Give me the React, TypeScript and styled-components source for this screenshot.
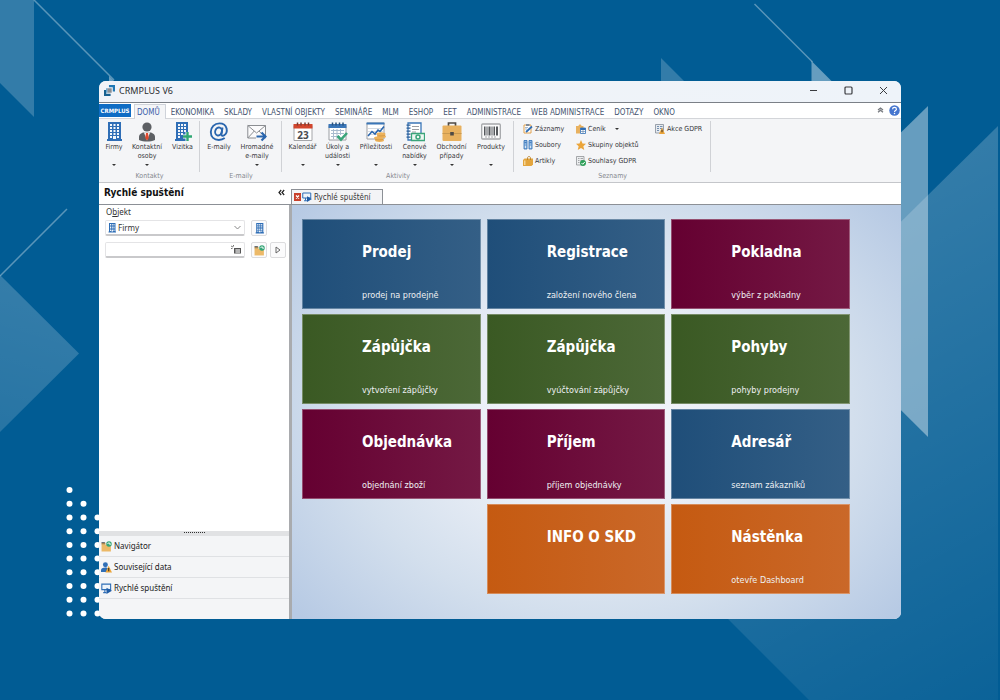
import React, { ReactNode, useState } from 'react';
import styled, { createGlobalStyle } from 'styled-components';

const tahoma = '"DejaVu Sans Condensed", "DejaVu Sans", sans-serif';
const segoe = '"Noto Sans", "Open Sans", sans-serif';

const GlobalStyle = createGlobalStyle`
  *, *::before, *::after { box-sizing: border-box; }
  body { margin: 0; background: #015c94; }
  button, input, select { font: inherit; color: inherit; margin: 0; }
  svg { display: block; flex: none; }
`;

const Page = styled.div`
  position: relative;
  display: flex;
  min-height: 100vh;
  padding: 81px 99px;
  overflow: hidden;
  background: #015c94;
  font-family: ${tahoma};
`;

const Backdrop = styled.svg`
  position: absolute;
  inset: 0;
  width: 100%;
  height: 100%;
`;

const AppWindow = styled.main`
  position: relative;
  display: flex;
  flex-direction: column;
  flex: 1;
  min-width: 0;
  border-radius: 7px;
  overflow: hidden;
  background: #fff;
`;

const TitleBar = styled.header`
  display: flex;
  align-items: center;
  height: 22px;
  padding: 0 0 2px 5px;
  background: linear-gradient(90deg, #f1f3f8, #eef3f9);
  border-bottom: 1px solid #7b8087;
`;

const WindowTitle = styled.h1`
  flex: 1;
  margin: 0 0 0 4px;
  font: 400 9px/12px ${segoe};
  color: #2b2c30;
`;

const WindowButton = styled.button`
  display: grid;
  place-items: center;
  width: 35px;
  height: 18px;
  padding: 0;
  border: 0;
  background: none;
`;

const MenuBar = styled.nav`
  display: flex;
  align-items: stretch;
  height: 16px;
  padding-top: 1px;
  border-bottom: 1px solid #d3d5d9;
`;

const AppTab = styled.button`
  width: 32px;
  height: 13px;
  margin-right: 3px;
  padding: 0;
  border: 0;
  background: #0f6cc4;
  color: #fff;
  font-size: 6px;
  font-weight: 700;
  line-height: 13px;
`;

const MenuTab = styled.button<{ $active?: boolean }>`
  height: 15px;
  padding: ${p => (p.$active ? '0 5px 0 2px' : '0 5px')};
  border: solid ${p => (p.$active ? '#cfd3da' : 'transparent')};
  border-width: ${p => (p.$active ? '1px 1px 0' : '1px 0 0')};
  background: ${p => (p.$active ? '#f4f5f7' : 'none')};
  color: ${p => (p.$active ? '#3a5da8' : '#44546f')};
  font-size: 8px;
  line-height: 16px;
  white-space: nowrap;
`;

const MenuTools = styled.div`
  display: flex;
  align-items: center;
  gap: 5px;
  margin-left: auto;
  padding: 0 1px 2px 0;
`;

const PlainButton = styled.button`
  display: grid;
  place-items: center;
  padding: 0;
  border: 0;
  background: none;
`;

const Ribbon = styled.section`
  display: flex;
  height: 64px;
  background: #f4f5f7;
  border-bottom: 1px solid #c4c6ca;
  color: #37373b;
  font-size: 7px;
`;

const Group = styled.section<{ $pad: number }>`
  position: relative;
  display: flex;
  flex-direction: column;
  justify-content: space-between;
  padding: 0 ${p => p.$pad}px;
  &::after {
    content: '';
    position: absolute;
    top: 2px;
    bottom: 10px;
    right: 0;
    border-right: 1px solid #d0d2d6;
  }
`;

const GroupBody = styled.div`
  display: flex;
`;

const GroupName = styled.h2`
  margin: 0;
  padding-bottom: 1px;
  font-size: 7px;
  line-height: 9px;
  font-weight: 400;
  text-align: center;
  color: #85888e;
`;

const BigButton = styled.button<{ $width: number }>`
  display: flex;
  flex-direction: column;
  align-items: center;
  width: ${p => p.$width}px;
  padding: 3px 0 0;
  border: 0;
  background: none;
  line-height: 9px;
`;

const BigLabel = styled.span`
  height: 22px;
  padding-top: 1px;
  white-space: pre-line;
`;

const Caret = styled.i`
  border: 2px solid transparent;
  border-top-color: #333;
  border-bottom: 0;
`;

const ListGrid = styled.div`
  display: grid;
  grid-template-columns: 53px 79px auto;
  grid-auto-rows: 16px;
  padding-top: 2px;
`;

const SmallButton = styled.button`
  display: flex;
  align-items: center;
  gap: 2px;
  padding: 0;
  border: 0;
  background: none;
  white-space: nowrap;
  ${Caret} { margin-left: 7px; }
`;

const Body = styled.div`
  display: flex;
  flex: 1;
`;

const Sidebar = styled.aside`
  display: flex;
  flex-direction: column;
  width: 190px;
  flex: none;
`;

const SideHeader = styled.header`
  display: flex;
  align-items: center;
  justify-content: space-between;
  height: 22px;
  padding: 0 4px 2px 5px;
  border-bottom: 1px solid #8c9096;
`;

const SideTitle = styled.h2`
  margin: 0;
  font-size: 10px;
  line-height: 14px;
  color: #111;
`;

const SearchForm = styled.form`
  display: flex;
  flex-direction: column;
  flex: 1;
  padding: 2px 3px 0 6px;
  font: 8px/11px ${segoe};
  color: #333;
`;

const FieldLabel = styled.label`
  padding-left: 1px;
  line-height: 10px;
`;

const FieldRow = styled.div`
  display: flex;
  align-items: center;
  gap: 3px;
  height: 22px;
`;

const Field = styled.div`
  display: flex;
  align-items: center;
  flex: 1;
  gap: 1px;
  height: 16px;
  margin-right: 3px;
  padding: 0 3px 0 1px;
  border: 1px solid #e4e4e6;
  border-bottom: 2px solid #c9c9cb;
  border-radius: 2px;
`;

const SelectBox = styled.select`
  appearance: none;
  flex: 1;
  min-width: 0;
  padding: 0;
  border: 0;
  outline: 0;
  background: none;
`;

const TextBox = styled.input`
  flex: 1;
  min-width: 0;
  padding: 0;
  border: 0;
  outline: 0;
  background: none;
`;

const ToolButton = styled.button`
  display: grid;
  place-items: center;
  width: 16px;
  height: 16px;
  padding: 0;
  border: 1px solid #dcdcde;
  border-radius: 2px;
  background: #fbfbfc;
`;

const Grip = styled.div`
  height: 5px;
  padding-top: 1px;
  background: #e1e2e4;
  &::before {
    content: '';
    display: block;
    width: 21px;
    margin: 0 auto;
    border-top: 1px dotted #333;
  }
`;

const SideNav = styled.nav`
  padding-bottom: 20px;
  background: #f4f5f7;
`;

const SideItem = styled.button`
  display: flex;
  align-items: center;
  gap: 2px;
  width: 100%;
  height: 21px;
  padding: 0 2px;
  border: 0;
  border-bottom: 1px solid #dfe1e4;
  background: none;
  font: 8px/12px ${segoe};
  color: #222;
`;

const Content = styled.section`
  display: flex;
  flex-direction: column;
  flex: 1;
  min-width: 0;
`;

const TabStrip = styled.div`
  display: flex;
  align-items: flex-end;
  height: 22px;
  padding-left: 2px;
  border-bottom: 1px solid #8c9096;
`;

const DocTab = styled.div`
  display: flex;
  align-items: center;
  gap: 1px;
  height: 15px;
  padding: 0 11px 0 2px;
  border: 1px solid #8c9096;
  border-bottom: 0;
  background: #f3f4f6;
`;

const DocTabName = styled.button`
  display: flex;
  align-items: center;
  gap: 2px;
  padding: 0;
  border: 0;
  background: none;
  font: 8px/11px ${tahoma};
  color: #333;
  white-space: nowrap;
`;

const Board = styled.div`
  flex: 1;
  padding: 14px 51px 24px 10px;
  border-left: 3px solid #a9abae;
  background: radial-gradient(ellipse 62% 72% at 50% 50%, #f7f9fc 0%, #e9eef6 36%, #d3dfed 68%, #b7cae4 104%);
`;

const TileGrid = styled.div`
  display: grid;
  grid-template-columns: repeat(3, minmax(0, 1fr));
  gap: 5px 6px;
`;

const tones = {
  blue: ['#1f4e79', '#345f86'],
  wine: ['#650031', '#741944'],
  green: ['#3a5923', '#4c6837'],
  orange: ['#c55a11', '#ca6829'],
};
type Tone = keyof typeof tones;

const Tile = styled.button<{ $tone: Tone; $column: number }>`
  display: flex;
  flex-direction: column;
  justify-content: space-between;
  grid-column: ${p => p.$column};
  height: 90px;
  padding: 22px 4px 7px 59px;
  border: 1px solid rgba(255, 255, 255, 0.3);
  background: linear-gradient(90deg, ${p => tones[p.$tone][0]}, ${p => tones[p.$tone][1]}) border-box;
  color: #fff;
  text-align: left;
`;

const TileTitle = styled.strong`
  font-size: 15px;
  line-height: 20px;
  white-space: nowrap;
`;

const TileNote = styled.span`
  font-size: 9px;
  line-height: 12px;
  white-space: nowrap;
  color: #eef0f3;
`;

/* ---------- icons ---------- */

const Icon = ({ size = 20, children }: { size?: number; children: ReactNode }) => (
  <svg width={size} height={size} viewBox="0 0 20 20" fill="none" aria-hidden="true">{children}</svg>
);

const Building = ({ size = 20 }: { size?: number }) => (
  <Icon size={size}>
    <path fill="#2f6eb6" d="M4 0h13v17h1v2H3v-2h1z" />
    <path fill="#f4f7fb" d="M6 2h2v2H6zM9.500 2h2v2h-2zM13 2h2v2h-2zM6 5h2v2H6zM9.500 5h2v2h-2zM13 5h2v2h-2zM6 8h2v2H6zM9.500 8h2v2h-2zM13 8h2v2h-2zM6 11h2v2H6zM9.500 11h2v2h-2zM13 11h2v2h-2zM6 14h2v2H6zM9 14h3v3H9zM13 14h2v2h-2z" />
  </Icon>
);

const BuildingPlus = () => (
  <Icon>
    <path fill="#2f6eb6" d="M3 0h12v17h1v2H2v-2h1z" />
    <path fill="#f4f7fb" d="M5 2h2v2H5zM8 2h2v2H8zM11 2h2v2h-2zM5 5h2v2H5zM8 5h2v2H8zM11 5h2v2h-2zM5 8h2v2H5zM8 8h2v2H8zM11 8h2v2h-2zM5 11h2v2H5zM8 11h2v2H8zM5 14h2v2H5z" />
    <path stroke="#f4f5f7" strokeWidth="4" d="M14.500 10v9M10 14.500h9" />
    <path stroke="#2fa874" strokeWidth="2.400" d="M14.500 10v9M10 14.500h9" />
  </Icon>
);

const Person = () => (
  <Icon>
    <circle cx="10" cy="5" r="4.600" fill="#5d6064" />
    <path fill="#5d6064" d="M2 18v-3c0-3 3-4.500 5-4.500h6c2 0 5 1.500 5 4.500v3c-5 2-11 2-16 0z" />
    <path fill="#fff" d="M7 10.500h6l-3 8z" />
    <path fill="#e04a2f" d="M9 11h2l.8 5-1.800 2.500L8.200 16z" />
  </Icon>
);

const At = () => (
  <Icon>
    <g stroke="#2a66ae" strokeWidth="1.900">
      <ellipse cx="9.500" cy="9.500" rx="3.300" ry="4" transform="rotate(18 9.500 9.500)" />
      <path d="M13.500 5.500l-1 6.500c-.2 2 1.300 2.300 2.700 1.300 2-1.400 3-4 2.400-6.800C16.700 3 13.800 1.400 10.500 1.400 5.500 1.400 1.800 5 1.800 10c0 5 3.400 8 8 8 2.300 0 4.200-.6 5.900-1.900" />
    </g>
  </Icon>
);

const MailForward = () => (
  <Icon>
    <path fill="#fbfbfc" stroke="#8b8e92" d="M.8 3.500h17.700V16H.8z" />
    <path stroke="#8b8e92" d="M.8 3.500l8.800 7.500 8.900-7.500M.8 16l6.500-7M18.500 16L12 9" />
    <path stroke="#f4f5f7" strokeWidth="5" d="M9 14.500h9" />
    <path stroke="#2a66ae" strokeWidth="2.200" d="M9.500 14.500h8M14.500 10.500l4 4-4 4" />
  </Icon>
);

const CalendarDay = () => (
  <Icon>
    <path fill="#fff" stroke="#a4a6a9" d="M1 3.500h18V18.500H1z" />
    <path fill="#d2452d" d="M.5 2h19v4.500H.5z" />
    <path stroke="#7c3a30" strokeWidth="1.500" d="M4.500.5v3M8 .5v3M12 .5v3M15.500 .5v3" />
    <text x="10" y="16.500" textAnchor="middle" fontFamily="Noto Sans, sans-serif" fontWeight="700" fontSize="10" fill="#4a4c50">23</text>
  </Icon>
);

const CalendarCheck = () => (
  <Icon>
    <path fill="#fff" stroke="#9b9ea3" d="M1 3.500h17V18H1z" />
    <path fill="#3a76b8" d="M.5 2h18v4H.5z" />
    <path stroke="#27507c" strokeWidth="1.500" d="M4.500.5v3M8 .5v3M11.500 .5v3M15 .5v3" />
    <path stroke="#a9bccf" d="M3 8.500h13M3 11.500h13M3 14.500h9M5.500 7v10M9 7v10M12.500 7v6" />
    <path stroke="#3aa57a" strokeWidth="2.600" d="M9.500 14l3.500 3.700 6-6.700" />
  </Icon>
);

const Opportunity = () => (
  <Icon>
    <path fill="#fff" stroke="#9b9ea3" d="M1 1h17v16H1z" />
    <path fill="#3a76b8" d="M.5.5h18v2H.5z" />
    <path stroke="#d4dae2" d="M2 6.500h15M2 9.500h15M2 12.500h9" />
    <path stroke="#2a66ae" strokeWidth="1.600" d="M2 14l4-4.500 3 2.500 3-4 2 1.500 4-5" />
    <g fill="#ecb25c">
      <ellipse cx="15" cy="12" rx="4.500" ry="1.700" />
      <ellipse cx="15.500" cy="14.500" rx="4.500" ry="1.700" />
      <ellipse cx="12.500" cy="16" rx="4.500" ry="1.700" />
      <ellipse cx="13.500" cy="18.200" rx="4.500" ry="1.700" />
    </g>
    <path stroke="#c98a33" strokeWidth=".6" d="M11 13.300c2 .9 6 .9 8 0M9 17.300c2 .8 6 .8 8 0" />
  </Icon>
);

const PriceOffer = () => (
  <Icon>
    <path fill="#fff" stroke="#3a76b8" strokeWidth="1.300" d="M3 1h13v17H3z" />
    <path fill="#2d5f98" d="M1.500 2.500h4v1.200h-4zM1.500 5.500h4v1.200h-4zM1.500 8.500h4v1.200h-4zM1.500 11.500h4v1.200h-4zM1.500 14.500h4v1.200h-4z" />
    <path stroke="#9b9ea3" d="M7 4.500h7M7 7.500h7M7 10h4" />
    <path fill="#eef7f2" stroke="#3aa57a" strokeWidth="1.300" d="M6.500 11.500h13v7h-13z" />
    <circle cx="13" cy="15" r="2" stroke="#3aa57a" strokeWidth="1.500" />
  </Icon>
);

const Briefcase = () => (
  <Icon>
    <path stroke="#4e4a45" strokeWidth="1.700" d="M6.500 4V1h7v3" />
    <rect x=".5" y="3.500" width="19" height="15.500" rx="1" fill="#e8b15f" />
    <path stroke="#c99a52" d="M.5 11.500h19" />
    <path fill="#4e4a45" d="M8.200 10h3.600v3.500H8.200z" />
  </Icon>
);

const Barcode = () => (
  <Icon>
    <rect x=".7" y="2" width="18.600" height="15" rx="1" fill="#fafafb" stroke="#a5a7aa" strokeWidth="1.300" />
    <path fill="#55585c" d="M3 4.500h1.500v9H3zM5.500 4.500h1v9h-1zM7.500 4.500h2v9h-2zM10.500 4.500h1v9h-1zM12.500 4.500h1.500v9h-1.500zM15 4.500h2v9h-2z" />
    <path stroke="#a5a7aa" strokeDasharray="2 1" d="M4 15h12" />
  </Icon>
);

const Record = () => (
  <Icon size={10}>
    <path fill="#fff" stroke="#e0a04c" strokeWidth="2" d="M2 2h14v16H2z" />
    <path fill="#7f8a98" d="M6 0h7v4H6z" />
    <path stroke="#2f6eb6" strokeWidth="3.500" d="M6 16l12-11" />
    <path stroke="#8fa3b8" strokeWidth="1.500" d="M4 7h6M4 10h4" />
  </Icon>
);
const Files = () => (
  <Icon size={10}>
    <path fill="#8fb6df" stroke="#2f6eb6" strokeWidth="1.600" d="M2 1h6v17H2zM12 1h6v17h-6z" />
    <path stroke="#2f6eb6" strokeWidth="1.500" d="M3 5h4M13 5h4" />
    <circle cx="5" cy="14" r="1.500" fill="#fff" /><circle cx="15" cy="14" r="1.500" fill="#fff" />
  </Icon>
);
const Articles = () => (
  <Icon size={10}>
    <path fill="#e3a53d" d="M5 5h15v12l-3 3H0V8l3-3z" />
    <path stroke="#b97c1f" strokeWidth="1.600" d="M9 8V4c0-4 6-4 6 0v4" />
    <path fill="#f6d490" d="M2 9h3v9H2z" />
  </Icon>
);
const PriceList = () => (
  <Icon size={10}>
    <path fill="#e8b15f" d="M0 4h5c0-4 6-4 6 0h4v4H8v11H0z" />
    <path fill="#fff" stroke="#2f6eb6" strokeWidth="1.600" d="M9 8h10v11H9z" />
    <path fill="#2f6eb6" d="M9 8h10v4H9z" />
    <path stroke="#6f8fb2" strokeWidth="1.500" d="M10 15h8M14 12v7" />
  </Icon>
);
const Star = () => (
  <Icon size={10}>
    <path fill="#eba53a" d="M10 0l3 7 7 .6-5.300 4.700L16.500 20 10 15.800 3.500 20l1.800-7.700L0 7.600 7 7z" />
  </Icon>
);
const Consent = () => (
  <Icon size={10}>
    <path fill="#eceef0" stroke="#8b8e92" strokeWidth="1.500" d="M1 1h15v17H1z" />
    <path stroke="#8b8e92" strokeWidth="1.500" d="M4 5h3M9 5h5M4 9h3M9 9h5M4 13h3" />
    <circle cx="14" cy="14" r="6" fill="#2fa05a" />
    <path stroke="#fff" strokeWidth="2" d="M11 14l2.500 2.500L17.500 12" />
  </Icon>
);
const ConsentAlert = () => (
  <Icon size={10}>
    <path fill="#e6eaef" stroke="#7d8793" strokeWidth="1.500" d="M1 1h16v17H1z" />
    <path stroke="#5f7fa5" strokeWidth="1.700" d="M4 5h4M10 5h5M4 9h4M10 9h5M4 13h4" />
    <path fill="#eba53a" d="M14 7l6 13H8z" />
    <path stroke="#3b3328" strokeWidth="2" d="M14 11.500v5" />
  </Icon>
);
const FolderGo = ({ size = 11 }: { size?: number }) => (
  <Icon size={size}>
    <path fill="#b98a3f" d="M1 3h7v4H1z" />
    <path fill="#ecb968" d="M1 7h17v12H1z" />
    <path fill="#6b7078" d="M1 2h6v2H1z" />
    <circle cx="14.500" cy="5.500" r="5" fill="#35a577" />
    <path stroke="#fff" strokeWidth="1.600" d="M12 5.500c1-3 4-3 5 0M14.500 5l3 1.500" />
  </Icon>
);
const Related = () => (
  <Icon size={11}>
    <circle cx="8" cy="5" r="4.500" fill="#2f6eb6" />
    <path fill="#2f6eb6" d="M0 18v-3c0-3 3-5 8-5 3 0 5 1 6 3l-3 5z" />
    <path fill="#eba53a" d="M14 7l6 12H8z" />
    <path stroke="#3b3328" strokeWidth="2" d="M14 11v6" />
  </Icon>
);
const QuickRun = ({ size = 11 }: { size?: number }) => (
  <Icon size={size}>
    <path fill="#eef4fa" stroke="#2f6eb6" strokeWidth="2" d="M1.500 2h16v10h-16z" />
    <path stroke="#2f6eb6" strokeWidth="2" d="M4 17.500h6M7 12v5" />
    <path fill="#1f5ca6" d="M10 8.500l10 5.500-10 6z" />
  </Icon>
);
const Logo = () => (
  <Icon size={11}>
    <path fill="#2077b4" d="M9 0h11v12h-4V4H9z" />
    <path fill="#8c8f94" d="M6 6h8v8H6z" />
    <path fill="#17608f" d="M0 9h4v7h8v4H0z" />
    <path fill="#4d9acb" d="M4 6h2v8H4z" />
  </Icon>
);
const Help = () => (
  <Icon size={11}>
    <circle cx="10" cy="10" r="9.500" fill="#4676cf" />
    <path stroke="#fff" strokeWidth="2.200" d="M6.500 7.500c0-4 7-4 7 0 0 2.500-3.500 2.500-3.500 5" />
    <circle cx="10" cy="15.500" r="1.400" fill="#fff" />
  </Icon>
);

/* ---------- data ---------- */

const menus = ['DOMŮ', 'EKONOMIKA', 'SKLADY', 'VLASTNÍ OBJEKTY', 'SEMINÁŘE', 'MLM', 'ESHOP', 'EET', 'ADMINISTRACE', 'WEB ADMINISTRACE', 'DOTAZY', 'OKNO'];

type Command = { label: string; icon: ReactNode; width: number; more?: boolean };

const groups: { name: string; pad: number; items: Command[] }[] = [
  {
    name: 'Kontakty', pad: 1, items: [
      { label: 'Firmy', icon: <Building />, width: 28, more: true },
      { label: 'Kontaktní\nosoby', icon: <Person />, width: 38, more: true },
      { label: 'Vizitka', icon: <BuildingPlus />, width: 33 },
    ],
  },
  {
    name: 'E-maily', pad: 3, items: [
      { label: 'E-maily', icon: <At />, width: 32 },
      { label: 'Hromadné\ne-maily', icon: <MailForward />, width: 44, more: true },
    ],
  },
  {
    name: 'Aktivity', pad: 3, items: [
      { label: 'Kalendář', icon: <CalendarDay />, width: 35, more: true },
      { label: 'Úkoly a\nudálosti', icon: <CalendarCheck />, width: 35, more: true },
      { label: 'Příležitosti', icon: <Opportunity />, width: 42, more: true },
      { label: 'Cenové\nnabídky', icon: <PriceOffer />, width: 35, more: true },
      { label: 'Obchodní\npřípady', icon: <Briefcase />, width: 39, more: true },
      { label: 'Produkty', icon: <Barcode />, width: 40, more: true },
    ],
  },
];

const lists: ({ label: string; icon: ReactNode; more?: boolean } | null)[] = [
  { label: 'Záznamy', icon: <Record /> },
  { label: 'Ceník', icon: <PriceList />, more: true },
  { label: 'Akce GDPR', icon: <ConsentAlert /> },
  { label: 'Soubory', icon: <Files /> },
  { label: 'Skupiny objektů', icon: <Star /> },
  null,
  { label: 'Artikly', icon: <Articles /> },
  { label: 'Souhlasy GDPR', icon: <Consent /> },
];

const tiles: { title: string; note?: string; tone: Tone; column: number }[] = [
  { title: 'Prodej', note: 'prodej na prodejně', tone: 'blue', column: 1 },
  { title: 'Registrace', note: 'založení nového člena', tone: 'blue', column: 2 },
  { title: 'Pokladna', note: 'výběr z pokladny', tone: 'wine', column: 3 },
  { title: 'Zápůjčka', note: 'vytvoření zápůjčky', tone: 'green', column: 1 },
  { title: 'Zápůjčka', note: 'vyúčtování zápůjčky', tone: 'green', column: 2 },
  { title: 'Pohyby', note: 'pohyby prodejny', tone: 'green', column: 3 },
  { title: 'Objednávka', note: 'objednání zboží', tone: 'wine', column: 1 },
  { title: 'Příjem', note: 'příjem objednávky', tone: 'wine', column: 2 },
  { title: 'Adresář', note: 'seznam zákazníků', tone: 'blue', column: 3 },
  { title: 'INFO O SKD', tone: 'orange', column: 2 },
  { title: 'Nástěnka', note: 'otevře Dashboard', tone: 'orange', column: 3 },
];

const dots = [0, 1, 2].flatMap(col =>
  Array.from({ length: 10 - col }, (_, i) => ({ x: 69.5 + col * 14, y: 490 + (i + col) * 13.72 })),
);

const Scenery = () => (
  <Backdrop viewBox="0 0 1000 700" preserveAspectRatio="xMidYMid slice" aria-hidden="true">
    <defs>
      <linearGradient id="fadeBig" gradientUnits="userSpaceOnUse" x1="760" y1="250" x2="1000" y2="700">
        <stop offset="0" stopColor="#fff" stopOpacity=".2" />
        <stop offset="1" stopColor="#fff" stopOpacity=".04" />
      </linearGradient>
      <linearGradient id="fadeLeft" gradientUnits="userSpaceOnUse" x1="40" y1="300" x2="0" y2="432">
        <stop offset="0" stopColor="#fff" stopOpacity=".2" />
        <stop offset="1" stopColor="#fff" stopOpacity=".15" />
      </linearGradient>
    </defs>
    <path fill="#fff" fillOpacity=".2" d="M0 0h34v117L0 83z" />
    <path fill="url(#fadeLeft)" d="M0 275l79 78.500L0 432z" />
    <path fill="url(#fadeBig)" d="M998 126L614 505l195 195h189z" />
    <path fill="#fff" fillOpacity=".4" d="M928 106L760 270l168 167z" />
    <path fill="#fff" fillOpacity=".2" d="M661 58l40 40h-40z" />
    <path fill="#fff" fillOpacity=".4" d="M811.500 61l30 30h-30zM109 76l10 10h-10z" />
    <path stroke="#fff" strokeOpacity=".35" strokeWidth="1.500" d="M34 0l80 80M67 209L0 276M754.500 4l58 58" />
    {dots.map(d => <circle key={`${d.x}-${d.y}`} cx={d.x} cy={d.y} r="3" fill="#fff" />)}
  </Backdrop>
);

export default function App() {
  const [menu, setMenu] = useState('DOMŮ');
  return (
    <Page>
      <GlobalStyle />
      <Scenery />
      <AppWindow>
        <TitleBar>
          <Logo />
          <WindowTitle>CRMPLUS V6</WindowTitle>
          <WindowButton aria-label="Minimalizovat"><svg width="9" height="9" viewBox="0 0 9 9"><path stroke="#3a3b3f" d="M1 4.500h7" /></svg></WindowButton>
          <WindowButton aria-label="Maximalizovat"><svg width="9" height="9" viewBox="0 0 9 9"><rect x="1" y="1" width="7" height="7" rx="1" fill="none" stroke="#3a3b3f" strokeWidth="1.200" /></svg></WindowButton>
          <WindowButton aria-label="Zavřít"><svg width="9" height="9" viewBox="0 0 9 9"><path stroke="#3a3b3f" d="M1 1l7 7M8 1L1 8" /></svg></WindowButton>
        </TitleBar>

        <MenuBar>
          <AppTab>CRMPLUS</AppTab>
          {menus.map(m => <MenuTab key={m} $active={m === menu} onClick={() => setMenu(m)}>{m}</MenuTab>)}
          <MenuTools>
            <PlainButton aria-label="Sbalit pás karet"><svg width="7" height="6" viewBox="0 0 7 6" fill="none"><path stroke="#777b80" strokeWidth="1.300" d="M1 3l2.500-2L6 3M1 5.200l2.500-2 2.500 2" /></svg></PlainButton>
            <PlainButton aria-label="Nápověda"><Help /></PlainButton>
          </MenuTools>
        </MenuBar>

        <Ribbon>
          {groups.map(g => (
            <Group key={g.name} $pad={g.pad}>
              <GroupBody>
                {g.items.map(c => (
                  <BigButton key={c.label} $width={c.width}>
                    {c.icon}
                    <BigLabel>{c.label}</BigLabel>
                    {c.more && <Caret />}
                  </BigButton>
                ))}
              </GroupBody>
              <GroupName>{g.name}</GroupName>
            </Group>
          ))}
          <Group $pad={9}>
            <ListGrid>
              {lists.map((c, i) => c ? (
                <SmallButton key={c.label}>{c.icon}{c.label}{c.more && <Caret />}</SmallButton>
              ) : <span key={i} />)}
            </ListGrid>
            <GroupName>Seznamy</GroupName>
          </Group>
        </Ribbon>

        <Body>
          <Sidebar>
            <SideHeader>
              <SideTitle>Rychlé spuštění</SideTitle>
              <PlainButton aria-label="Skrýt panel"><svg width="7" height="7" viewBox="0 0 7 7" fill="none"><path stroke="#222" strokeWidth="1.200" d="M3.200 1L1 3.500 3.200 6M6.200 1L4 3.500 6.200 6" /></svg></PlainButton>
            </SideHeader>
            <SearchForm onSubmit={e => e.preventDefault()}>
              <FieldLabel htmlFor="object">O<u>b</u>jekt</FieldLabel>
              <FieldRow>
                <Field>
                  <Building size={10} />
                  <SelectBox id="object" defaultValue="Firmy"><option>Firmy</option></SelectBox>
                  <svg width="7" height="5" viewBox="0 0 7 5" fill="none"><path stroke="#888" d="M.5 1l3 3 3-3" /></svg>
                </Field>
                <ToolButton type="button" aria-label="Firmy"><Building size={11} /></ToolButton>
                <svg width="16" height="1" />
              </FieldRow>
              <FieldRow>
                <Field>
                  <TextBox aria-label="Hledat" />
                  <svg width="10" height="9" viewBox="0 0 10 9" fill="none"><path fill="#555" d="M3 3h7v5.500H3z" /><path stroke="#fff" strokeWidth=".7" d="M4 5h5M4 7h5M6 4v4M8 4v4" /><path stroke="#555" strokeWidth=".8" d="M0 1l2 1M2.500 0v1.500M0 3.500h1.500" /></svg>
                </Field>
                <ToolButton type="button" aria-label="Otevřít"><FolderGo /></ToolButton>
                <ToolButton aria-label="Spustit"><svg width="6" height="8" viewBox="0 0 6 8" fill="none"><path stroke="#666" d="M1 1l4 3-4 3z" /></svg></ToolButton>
              </FieldRow>
            </SearchForm>
            <Grip />
            <SideNav>
              <SideItem><FolderGo />Navigátor</SideItem>
              <SideItem><Related />Související data</SideItem>
              <SideItem><QuickRun />Rychlé spuštění</SideItem>
            </SideNav>
          </Sidebar>

          <Content>
            <TabStrip>
              <DocTab>
                <PlainButton aria-label="Zavřít kartu"><svg width="7" height="8" viewBox="0 0 7 8"><path fill="#c8402b" d="M0 0h7v8H0z" /><path stroke="#fff" strokeWidth="1.200" d="M2 2.500l3 3M5 2.500l-3 3" /></svg></PlainButton>
                <DocTabName><QuickRun size={10} />Rychlé spuštění</DocTabName>
              </DocTab>
            </TabStrip>
            <Board>
              <TileGrid>
                {tiles.map(t => (
                  <Tile key={t.title + t.column} $tone={t.tone} $column={t.column}>
                    <TileTitle>{t.title}</TileTitle>
                    {t.note && <TileNote>{t.note}</TileNote>}
                  </Tile>
                ))}
              </TileGrid>
            </Board>
          </Content>
        </Body>
      </AppWindow>
    </Page>
  );
}
